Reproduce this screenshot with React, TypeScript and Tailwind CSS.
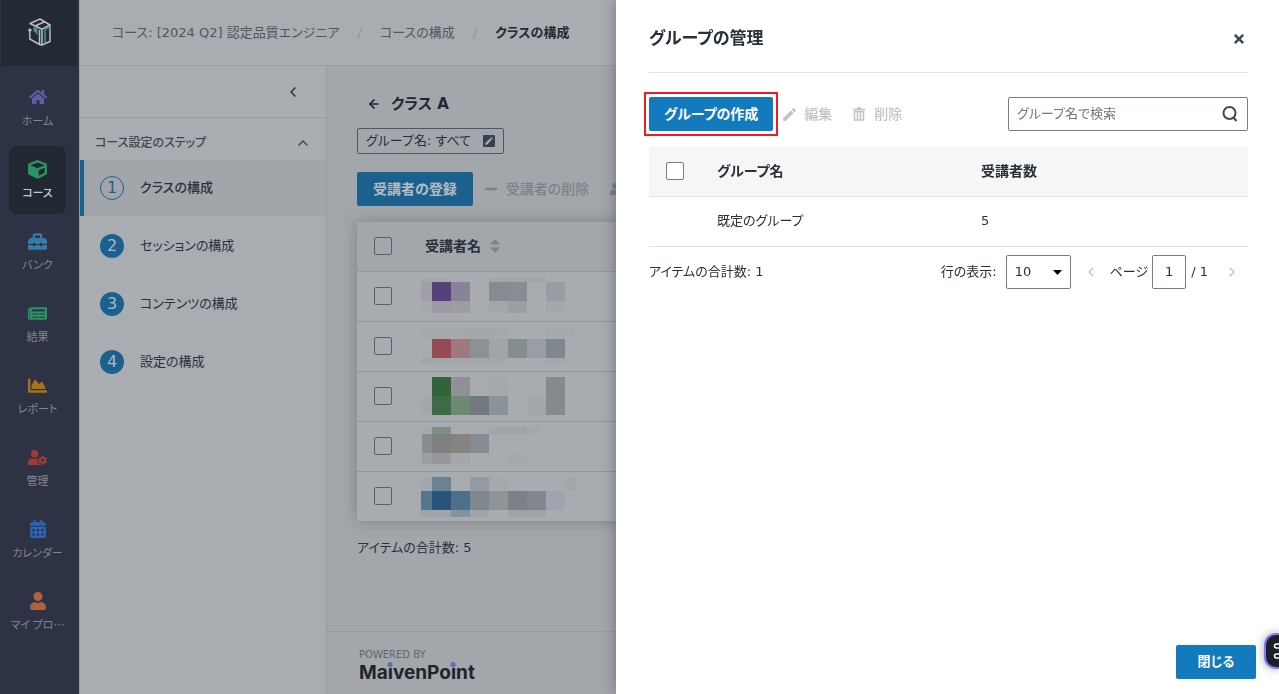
import type { ReactNode } from "react";
import { ArrowLeft, ChevronLeft, ChevronRight, ChevronUp } from "lucide-react";
import {
  FaCalendarAlt,
  FaChartArea,
  FaCube,
  FaHome,
  FaMinus,
  FaNewspaper,
  FaTimes,
  FaToolbox,
  FaUser,
  FaUserCog,
} from "react-icons/fa";
import { MdEdit } from "react-icons/md";

type NavItem = { label: string; icon: ReactNode; active?: boolean };

const navItems: NavItem[] = [
  { label: "ホーム", icon: <FaHome className="size-[18px] text-[#5a5fa8]" /> },
  { label: "コース", icon: <FaCube className="size-[19px] text-[#2b9461]" />, active: true },
  { label: "バンク", icon: <FaToolbox className="size-[19px] text-[#377ca8]" /> },
  { label: "結果", icon: <FaNewspaper className="size-[19px] text-[#2b9461]" /> },
  { label: "レポート", icon: <FaChartArea className="size-[19px] text-[#a87313]" /> },
  { label: "管理", icon: <FaUserCog className="size-[19px] text-[#a03c38]" /> },
  { label: "カレンダー", icon: <FaCalendarAlt className="size-[18px] text-[#2a65b3]" /> },
  { label: "マイ プロ…", icon: <FaUser className="size-[18px] text-[#b0613f]" /> },
];

const steps = ["クラスの構成", "セッションの構成", "コンテンツの構成", "設定の構成"];

// Each block: x, y, width, height, colour, inside a 50px high row.
type Block = [number, number, number, number, string];

const maskedNames: Block[][] = [
  [
    [0, 6, 30, 4, "#a4a7aa"], [68, 6, 57, 4, "#a2a6a9"],
    [0, 10, 11, 19, "#9f9fa9"], [11, 10, 19, 19, "#56417a"], [30, 10, 19, 19, "#898399"],
    [68, 10, 19, 19, "#848c91"], [87, 10, 19, 19, "#898d93"], [125, 10, 19, 19, "#989da4"],
    [0, 29, 11, 12, "#a6a8ac"], [11, 29, 19, 12, "#9c9ba5"], [30, 29, 19, 12, "#9b9da3"],
    [68, 29, 19, 12, "#a4a7aa"], [87, 29, 19, 12, "#9b9ea2"], [125, 29, 19, 12, "#a5a8ab"],
  ],
  [
    [0, 6, 49, 11, "#a6a9ac"], [49, 6, 19, 11, "#a2a7aa"], [68, 6, 19, 11, "#a5a9ac"], [125, 6, 28, 11, "#a6a9ad"],
    [11, 17, 19, 19, "#954c54"], [30, 17, 19, 19, "#9f7880"], [49, 17, 19, 19, "#8b9195"],
    [68, 17, 19, 19, "#a0a5a9"], [87, 17, 19, 19, "#858d90"], [106, 17, 19, 19, "#999ea6"], [125, 17, 19, 19, "#80878f"],
    [0, 36, 11, 6, "#a4a5a8"], [11, 36, 76, 6, "#a5a8ab"], [125, 36, 19, 6, "#a4a7ab"],
  ],
  [
    [11, 5, 19, 19, "#33633b"], [30, 5, 19, 19, "#8f9197"], [68, 5, 19, 19, "#a6a9ac"], [125, 5, 19, 38, "#86898d"],
    [0, 24, 11, 19, "#a3a8ab"], [11, 24, 19, 19, "#3d6b46"], [30, 24, 19, 19, "#6c8973"],
    [49, 24, 19, 19, "#727982"], [68, 24, 19, 19, "#8b939a"], [106, 24, 19, 19, "#a1a7aa"],
  ],
  [
    [0, 5, 11, 7, "#a6a9ac"], [11, 5, 19, 7, "#7d9086"], [68, 5, 38, 7, "#a0a5a8"], [106, 5, 14, 7, "#a3a8aa"],
    [1, 12, 10, 19, "#8a8b8f"], [11, 12, 19, 19, "#7f7f82"], [30, 12, 19, 19, "#858480"], [49, 12, 19, 19, "#868a93"],
    [1, 31, 10, 11, "#9b9ea3"], [11, 31, 19, 11, "#98989c"], [30, 31, 19, 11, "#a5a7ad"], [87, 31, 19, 11, "#a6a9ac"],
  ],
  [
    [0, 5, 11, 14, "#a3a8ac"], [11, 5, 19, 14, "#6b8296"], [49, 5, 19, 14, "#9599a2"], [68, 5, 19, 14, "#a5a8ac"], [144, 5, 11, 14, "#a5a8ab"],
    [0, 19, 11, 19, "#56758f"], [11, 19, 19, 19, "#285479"], [30, 19, 19, 19, "#4e6f8a"], [49, 19, 19, 19, "#7f878f"],
    [68, 19, 19, 19, "#8f9597"], [87, 19, 19, 19, "#7c8189"], [106, 19, 19, 19, "#83868f"], [125, 19, 19, 19, "#a0a4af"],
    [0, 38, 30, 7, "#a0a3a8"], [30, 38, 19, 7, "#8293a0"], [49, 38, 19, 7, "#a0a3a8"], [87, 38, 38, 7, "#9fa3a7"],
  ],
];

function BrandMark() {
  return (
    <svg viewBox="0 0 24 28" className="h-7 w-6" fill="none" stroke="#b9bdc2" strokeWidth="1.5" strokeLinejoin="round">
      <path d="M2 5.5 12 1l10 6-8 4.200L2 5.500ZM7 8l10-4.500M14 11.200V27l8-3.500V7" />
      <path d="M11.500 26.500 1.800 21V11.500M.5 13l1.300-2 1.700 1.700M11.500 12v14.500L14 27" />
      <path d="m5.500 8.500 4 2v7l-2-3-2-1Z" fill="#4e8f93" stroke="none" />
      <path d="M17 25.500V11l4.500-2v4" stroke="#4e8f93" />
    </svg>
  );
}

function TrashIcon() {
  return (
    <svg viewBox="0 0 14 14" className="size-[14px]" fill="none" stroke="currentColor" strokeWidth="1.500">
      <path d="M1 2.500h12M5 1h4" />
      <path d="M2.500 4.500V13h9V4.500ZM5.500 4.500V13M8.500 4.500V13" />
    </svg>
  );
}

function Sidebar() {
  return (
    <nav className="flex w-[79px] shrink-0 flex-col bg-[#2e3245] font-['Noto_Sans_CJK_JP',sans-serif]">
      <a href="#top" aria-label="MaivenPoint" className="mr-0.5 ml-px flex h-[66px] items-center justify-center bg-[#232935] pb-0.5 pl-0.5">
        <BrandMark />
      </a>
      <ul className="flex flex-col gap-1 pt-2 pr-3 pl-[9px]">
        {navItems.map((item) => (
          <li key={item.label}>
            <a
              href="#nav"
              className={
                item.active
                  ? "flex h-[68px] w-[57px] flex-col items-center gap-[3px] rounded-lg bg-[#212832] pt-[13px] text-[11px] leading-5 font-medium text-[#c3c6ca]"
                  : "flex h-[68px] w-[57px] flex-col items-center gap-[3px] rounded-lg pt-[13px] text-[11px] leading-5 text-[#828693]"
              }
            >
              <span className="flex h-5 items-center">{item.icon}</span>
              <span className="whitespace-nowrap">{item.label}</span>
            </a>
          </li>
        ))}
      </ul>
    </nav>
  );
}

function StepsPanel() {
  return (
    <aside className="flex w-[248px] shrink-0 flex-col border-x border-[#999da1]">
      <div className="flex h-[52px] items-center justify-end border-b border-[#999da1] pr-[25px]">
        <button type="button" aria-label="折りたたむ">
          <ChevronLeft className="size-4 text-[#2b3743]" strokeWidth={2.5} />
        </button>
      </div>
      <button type="button" className="flex h-[42px] items-center justify-between pt-2 pr-[15px] pl-[15px] text-xs font-medium text-[#3b4550]">
        コース設定のステップ
        <ChevronUp className="size-4" strokeWidth={2} />
      </button>
      <ol className="flex flex-col gap-0.5 text-[13px]">
        {steps.map((step, i) => (
          <li key={step}>
            <a
              href="#step"
              className={
                i === 0
                  ? "flex h-14 items-center gap-4 border-l-4 border-[#1b618f] bg-[#a2a6aa] pl-4 font-medium text-[#27313c]"
                  : "flex h-14 items-center gap-4 border-l-4 border-transparent pl-4 text-[#27313c]"
              }
            >
              <span
                className={
                  i === 0
                    ? "flex size-6 items-center justify-center rounded-full border border-[#1b618f] text-base font-normal text-[#1b618f]"
                    : "flex size-6 items-center justify-center rounded-full bg-[#1b618f] text-base text-[#b0b6bc]"
                }
              >
                {i + 1}
              </span>
              {step}
            </a>
          </li>
        ))}
      </ol>
    </aside>
  );
}

function DimCheckbox({ label }: { label: string }) {
  return (
    <input
      type="checkbox"
      aria-label={label}
      className="block size-[18px] appearance-none rounded-xs border border-[#56606b]"
    />
  );
}

function ClassPage() {
  return (
    <main className="flex min-w-0 flex-1 flex-col bg-[#a3a7ab]">
      <div className="px-[30px] pt-[26px]">
        <h1 className="flex h-6 items-center gap-[10px] pl-[10px] text-[15px] font-bold text-[#1f2832]">
          <button type="button" aria-label="戻る">
            <ArrowLeft className="size-[14px]" strokeWidth={2.8} />
          </button>
          クラス A
        </h1>
        <button
          type="button"
          className="mt-3 flex h-[26px] items-center gap-3 rounded-xs border border-[#4d5762] px-2 text-[13px] text-[#27313c]"
        >
          グループ名: すべて
          <span className="flex size-3 items-center justify-center rounded-[1px] bg-[#344251]">
            <MdEdit className="size-[10px] text-[#a9adb1]" />
          </span>
        </button>
        <div className="mt-[18px] flex h-[34px] items-center text-sm font-medium whitespace-nowrap text-[#7c828a]">
          <button type="button" className="h-[34px] rounded-xs bg-[#1b618f] px-4 font-bold text-[#b4bbc1]">
            受講者の登録
          </button>
          <button type="button" disabled className="ml-[11px] flex items-center gap-2">
            <FaMinus className="size-[14px]" />
            受講者の削除
          </button>
          <button type="button" disabled aria-label="ユーザー" className="ml-5">
            <FaUser className="size-3" />
          </button>
        </div>
        <table className="mt-4 w-full table-fixed bg-[#a8acb0] text-left text-sm shadow-[0_0_14px_rgba(50,60,70,0.35)]">
          <thead>
            <tr className="h-[49px] border-b border-[#93979c] bg-[#a3a6aa]">
              <th className="w-16 pl-[17px]">
                <DimCheckbox label="すべて選択" />
              </th>
              <th className="font-bold text-[#27313c]">
                <span className="flex items-center gap-[9px] pl-1">
                  受講者名
                  <svg viewBox="0 0 10 14" className="h-[14px] w-[10px]" fill="#7e838a">
                    <path d="M5 0l5 5.500H0zM5 14l5-5.500H0z" />
                  </svg>
                </span>
              </th>
            </tr>
          </thead>
          <tbody>
            {maskedNames.map((blocks, row) => (
              <tr key={row} className="h-[50px] border-b border-[#93979c] last:border-b-0">
                <td className="w-16 pl-[17px]">
                  <DimCheckbox label={`受講者 ${row + 1}`} />
                </td>
                <td className="p-0">
                  <svg width="156" height="49" viewBox="0 0 156 49" className="block" shapeRendering="crispEdges">
                    {blocks.map(([x, y, w, h, fill], i) => (
                      <rect key={i} x={x} y={y} width={w} height={h} fill={fill} />
                    ))}
                  </svg>
                </td>
              </tr>
            ))}
          </tbody>
        </table>
        <p className="mt-[17px] text-[13px] leading-5 text-[#27313c]">アイテムの合計数: 5</p>
      </div>
      <footer className="mt-auto h-[63px] border-t border-[#999da1] px-8 pt-4">
        <p className="text-[10px] leading-[14px] text-[#5d666d]">POWERED BY</p>
        <p className="mt-px font-[Inter] text-[19px] leading-5 font-bold text-[#1f242b]">
          Ma<BrandI />venPo<BrandI />nt
        </p>
      </footer>
    </main>
  );
}

function BrandI() {
  return (
    <span className="relative">
      i
      <span className="absolute top-px left-1/2 size-[5px] -translate-x-1/2 rounded-full bg-[#5b73ae]" />
    </span>
  );
}

function GroupDrawer() {
  return (
    <section
      role="dialog"
      aria-label="グループの管理"
      className="fixed inset-y-0 right-0 flex w-[663px] max-w-full flex-col bg-white pr-[31px] pl-[33px] text-[13px] text-[#27313c] shadow-[0_0_14px_rgba(30,40,50,0.4)]"
    >
      <header className="flex h-[73px] items-center justify-between border-b border-[#e1e3e5] pt-1.5">
        <h2 className="text-[17px] font-bold">グループの管理</h2>
        <button type="button" aria-label="閉じる" className="pr-0.5">
          <FaTimes className="size-[14px] text-[#3b4b5c]" />
        </button>
      </header>

      <div className="mt-6 flex h-[34px] items-center text-sm font-medium text-[#bfc4c9]">
        <div className="relative">
          <button type="button" className="h-[34px] rounded-xs bg-[#127abd] px-[15px] font-bold text-white">
            グループの作成
          </button>
          <span className="pointer-events-none absolute -inset-[5px] border-2 border-[#ed1c24]" />
        </div>
        <button type="button" disabled className="ml-2 flex items-center gap-1.5">
          <MdEdit className="size-[17px]" />
          編集
        </button>
        <button type="button" disabled className="ml-5 flex items-center gap-2">
          <TrashIcon />
          削除
        </button>
        <label className="ml-auto flex h-[34px] w-60 items-center rounded-xs border border-[#747d88] pr-2 pl-2 text-[13px]">
          <input
            type="text"
            aria-label="グループ名で検索"
            placeholder="グループ名で検索"
            className="min-w-0 flex-1 font-normal text-[#27313c] outline-none placeholder:text-[#757575]"
          />
          <svg viewBox="0 0 18 18" className="size-[18px]" fill="none" stroke="#3b4b5c" strokeWidth="2">
            <circle cx="8.500" cy="8" r="6" />
            <path d="m12 12 3.500 4" />
          </svg>
        </label>
      </div>

      <table className="mt-4 w-full table-fixed text-left">
        <thead>
          <tr className="h-[49px] border-b border-[#e1e3e5] bg-[#f6f6f6] text-sm">
            <th className="w-[68px] pl-[17px]">
              <input
                type="checkbox"
                aria-label="すべて選択"
                className="block size-[18px] appearance-none rounded-xs border border-[#747d88] bg-white"
              />
            </th>
            <th className="w-[264px] font-bold">グループ名</th>
            <th className="font-bold">受講者数</th>
          </tr>
        </thead>
        <tbody>
          <tr className="h-[50px] border-b border-[#e1e3e5]">
            <td />
            <td>既定のグループ</td>
            <td>5</td>
          </tr>
        </tbody>
      </table>

      <div className="mt-2 flex h-[34px] items-center">
        <p>アイテムの合計数: 1</p>
        <label htmlFor="page-size" className="ml-auto">
          行の表示:
        </label>
        <div className="relative ml-[9px]">
          <select
            id="page-size"
            defaultValue="10"
            className="h-[34px] w-[65px] appearance-none rounded-xs border border-[#747d88] bg-white pl-2"
          >
            <option>10</option>
            <option>20</option>
            <option>50</option>
          </select>
          <svg viewBox="0 0 9 5" className="pointer-events-none absolute top-[15px] right-[9px] h-[5px] w-[9px]">
            <path d="M0 0h9L4.500 5z" fill="#000" />
          </svg>
        </div>
        <button type="button" disabled aria-label="前のページ" className="ml-3">
          <ChevronLeft className="size-4 text-[#bfc4c9]" strokeWidth={2} />
        </button>
        <label htmlFor="page-number" className="ml-[11px]">
          ページ
        </label>
        <input
          id="page-number"
          type="text"
          defaultValue="1"
          className="ml-1 h-[34px] w-[34px] rounded-xs border border-[#747d88] text-center"
        />
        <span className="ml-[5px]">/ 1</span>
        <button type="button" disabled aria-label="次のページ" className="mr-2 ml-4">
          <ChevronRight className="size-4 text-[#bfc4c9]" strokeWidth={2} />
        </button>
      </div>

      <button
        type="button"
        className="mt-auto -mr-2 mb-[15px] h-[34px] w-20 self-end rounded-xs bg-[#127abd] font-bold text-white"
      >
        閉じる
      </button>
    </section>
  );
}

function FloatingWidget() {
  return (
    <button
      type="button"
      aria-label="ツール"
      className="fixed right-0 bottom-[25px] flex h-9 w-[15px] items-center justify-end rounded-l-xl border-2 border-r-0 border-[#8478f5] bg-[#1d1f26] shadow-[0_0_10px_rgba(0,0,0,0.35)]"
    >
      <svg viewBox="0 0 6 18" className="h-[18px] w-1.5" fill="none" stroke="#fff" strokeWidth="1.500">
        <path d="M6 2H3.500a2 2 0 0 0 0 4H6M6 12H3.500a2 2 0 0 0 0 4H6" />
      </svg>
    </button>
  );
}

export default function App() {
  return (
    <div
      lang="ja"
      className="flex min-h-screen overflow-hidden bg-[#a9adb1] font-['DejaVu_Sans','Noto_Sans_CJK_JP',sans-serif] [font-feature-settings:'palt']"
    >
      <Sidebar />
      <div className="flex min-w-0 flex-1 flex-col">
        <nav className="flex h-[66px] items-center border-b border-l border-[#999da1] pl-8 text-[13px] whitespace-nowrap text-[#4e5762]">
          <a href="#course">コース: [2024 Q2] 認定品質エンジニア</a>
          <span className="mx-[18px] text-[#8c9197]">/</span>
          <a href="#config">コースの構成</a>
          <span className="mx-[18px] text-[#8c9197]">/</span>
          <span className="font-bold text-[#222b35]">クラスの構成</span>
        </nav>
        <div className="flex flex-1">
          <StepsPanel />
          <ClassPage />
        </div>
      </div>
      <GroupDrawer />
      <FloatingWidget />
    </div>
  );
}
